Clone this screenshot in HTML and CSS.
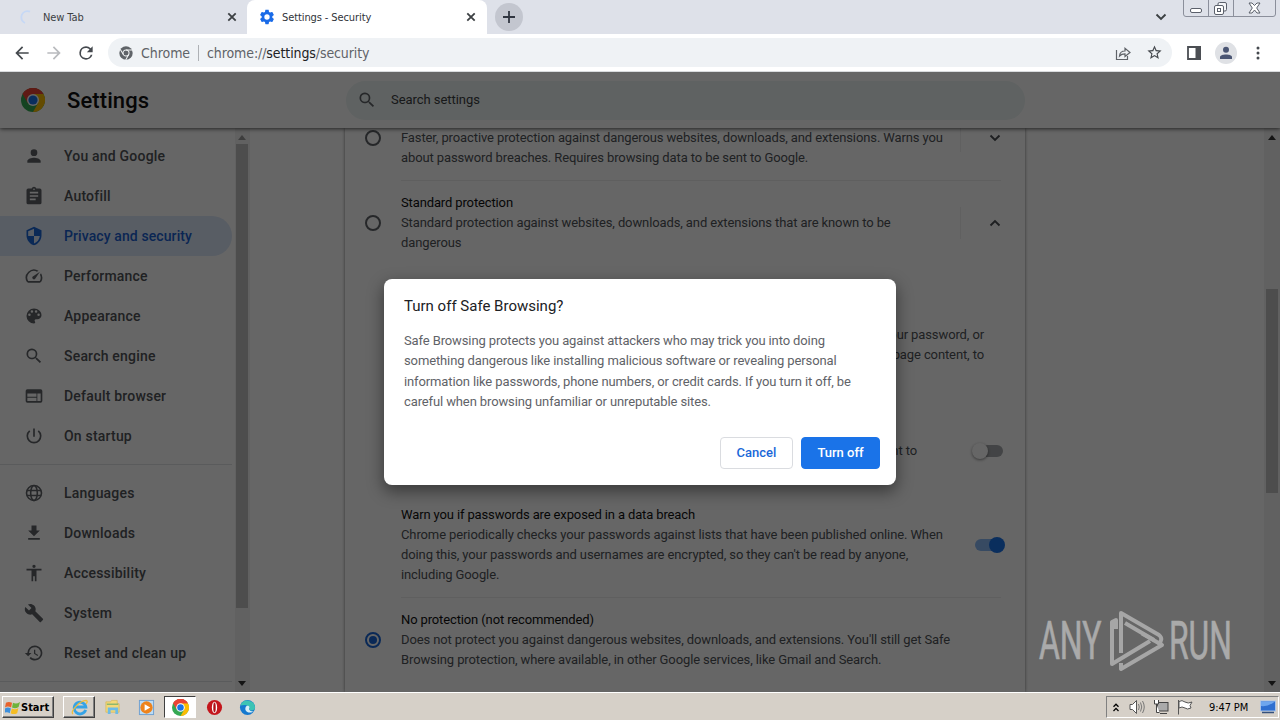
FILE: index.html
```html
<!DOCTYPE html>
<html lang="en">
<head>
<meta charset="utf-8">
<title>Settings - Security</title>
<link rel="stylesheet" href="styles.css">
</head>
<body>
<svg width="0" height="0" class="defs">
  <symbol id="chrome" viewBox="0 0 24 24">
    <circle cx="12" cy="12" r="12" fill="#34a853"/>
    <path d="M12 12 1.6 6A12 12 0 0 1 22.4 6Z" fill="#ea4335"/>
    <path d="M12 6H22.4A12 12 0 0 1 12 24L17.2 15Z" fill="#fbbc04"/>
    <path d="M1.6 6 6.8 15 12 12V6H22.4A12 12 0 0 0 1.6 6Z" fill="#ea4335"/>
    <circle cx="12" cy="12" r="6" fill="#fff"/>
    <circle cx="12" cy="12" r="4.6" fill="#1a73e8"/>
  </symbol>
</svg>

<header class="tabs">
  <div class="tab">
    <svg class="fav" viewBox="0 0 16 16"><path d="M11 2.6A6 6 0 1 0 6 14" fill="none" stroke="#c6d8f5" stroke-width="1.8"/></svg>
    <span>New Tab</span>
    <svg class="x" viewBox="0 0 10 10"><path d="M1.3 1.3l7.4 7.4M8.7 1.3L1.3 8.7"/></svg>
  </div>
  <div class="tab active">
    <svg class="fav" viewBox="0 0 24 24"><path fill="#1a6be8" d="M22 14.6l-2-1.6v-2l2-1.6c.3-.2.3-.5.2-.8l-2.200-4c-.1-.2-.4-.3-.7-.2l-2.600 1-1.700-1-.4-2.700c0-.3-.3-.5-.6-.5H10c-.3 0-.5.2-.6.5L9 4.400l-1.700 1-2.600-1c-.3-.1-.6 0-.7.2l-2.200 4c-.1.3-.1.600.2.800L4 11v2l-2 1.600c-.3.2-.3.500-.2.800l2.200 4c.1.2.4.3.7.2l2.600-1 1.700 1 .4 2.700c.1.3.3.5.6.5h4c.3 0 .6-.2.600-.5l.4-2.700 1.700-1 2.600 1c.3.1.6 0 .7-.2l2.200-4c.1-.3.1-.6-.2-.8zM12 16a4 4 0 1 1 0-8 4 4 0 0 1 0 8z"/></svg>
    <span>Settings - Security</span>
    <svg class="x" viewBox="0 0 10 10"><path d="M1.300 1.300l7.400 7.400M8.700 1.300L1.300 8.700"/></svg>
  </div>
  <div class="plus"><svg viewBox="0 0 14 14"><path d="M7 1v12M1 7h12" stroke="#303540" stroke-width="1.800"/></svg></div>
  <svg class="tabmenu" viewBox="0 0 12 8"><path d="M1.500 1.500 6 6l4.500-4.500" fill="none" stroke="#3c4043" stroke-width="1.900"/></svg>
  <svg class="winbtns" viewBox="0 0 93 17" fill="none" stroke="#8b8f9b">
    <path d="M.5 0V14Q.5 16.500 3 16.500H90Q92.500 16.500 92.500 14V0M25.500 0V16M50.500 0V16"/>
    <rect x="7.500" y="8.500" width="11" height="4" rx="1.500" fill="#fff" stroke="#5b606b"/>
    <g stroke="#5b606b"><rect x="35" y="2.500" width="8.500" height="8.500" rx="1.500" fill="#f3f4f7"/><rect x="31.500" y="5.500" width="9" height="9" rx="1.500" fill="#fff"/><rect x="34.500" y="8.500" width="3" height="3"/></g>
    <path d="M66 3h3l2.500 2.500L74 3h3l-3.300 5L77 13h-3l-2.500-3-2.500 3h-3l3.300-5z" fill="#fff" stroke="#5b606b"/>
  </svg>
</header>

<nav class="toolbar">
  <svg class="nav" viewBox="0 0 24 24"><path fill="#45494e" d="M20 11H7.830l5.590-5.590L12 4l-8 8 8 8 1.410-1.410L7.830 13H20z"/></svg>
  <svg class="nav" viewBox="0 0 24 24"><path fill="#b9bbbe" d="M12 4l-1.410 1.410L16.170 11H4v2h12.170l-5.580 5.590L12 20l8-8z"/></svg>
  <svg class="nav" viewBox="0 0 24 24"><path fill="#45494e" d="M17.650 6.350A7.950 7.950 0 0 0 12 4a8 8 0 1 0 7.730 10h-2.080A6 6 0 1 1 12 6c1.660 0 3.140.69 4.220 1.780L13 11h7V4z"/></svg>
  <div class="omni">
    <svg class="site" viewBox="0 0 24 24"><circle cx="12" cy="12" r="11.500" fill="#5f6368"/><g stroke="#f1f3f4" stroke-width="1.800" fill="none"><circle cx="12" cy="12" r="5.200"/><path d="M12 6.800H23M7.500 14.600 2 5.500M16.500 14.600 11.500 24"/></g></svg>
    <span class="chip">Chrome</span><i class="bar"></i>
    <span class="url">chrome://<b>settings</b>/security</span>
    <svg class="share" viewBox="0 0 16 16"><path d="M1.500 5V14.500H12.500V11M4.500 11C4.800 7.500 7 6 10 6V3.200L15 7.500 10 11.500V8.800C7.500 8.800 5.800 9.500 4.500 11Z" fill="none" stroke="#5f6368" stroke-width="1.200"/></svg>
    <svg class="star" viewBox="0 0 24 24"><path fill="#45494e" d="M22 9.240l-7.190-.62L12 2 9.190 8.630 2 9.240l5.460 4.730L5.820 21 12 17.270 18.180 21l-1.630-7.030zM12 15.400l-3.760 2.270 1-4.280-3.320-2.880 4.380-.38L12 6.100l1.710 4.040 4.380.38-3.320 2.880 1 4.280z"/></svg>
  </div>
  <svg class="side" viewBox="0 0 14 14"><path d="M1 1H13V13H1Z" fill="none" stroke="#4b4e53" stroke-width="1.800"/><path d="M8.500 0H14V14H8.500Z" fill="#4b4e53"/></svg>
  <div class="avatar"><svg viewBox="0 0 14 14"><circle cx="7" cy="3.800" r="3" fill="#4a5573"/><path d="M1 13V11C1 7.500 13 7.500 13 11V13Z" fill="#4a5573"/></svg></div>
  <svg class="dots" viewBox="0 0 4 14" fill="#45494e"><circle cx="2" cy="2" r="1.500"/><circle cx="2" cy="7" r="1.500"/><circle cx="2" cy="12" r="1.500"/></svg>
</nav>

<div class="page">
  <div class="head">
    <svg class="logo"><use href="#chrome"/></svg>
    <h1>Settings</h1>
    <div class="search"><svg viewBox="0 0 24 24"><path fill="#5f6368" d="M15.500 14h-.79l-.28-.27A6.500 6.500 0 1 0 13.730 14.430l.27.280v.79l5 4.990L20.490 19zm-6 0a4.500 4.500 0 1 1 0-9 4.500 4.500 0 0 1 0 9z"/></svg><span>Search settings</span></div>
  </div>
  <div class="cols">
    <aside class="menu">
      <a><svg viewBox="0 0 24 24"><path d="M12 12a4 4 0 1 0 0-8 4 4 0 0 0 0 8zm0 2c-2.670 0-8 1.340-8 4v2h16v-2c0-2.660-5.330-4-8-4z"/></svg>You and Google</a>
      <a><svg viewBox="0 0 24 24"><path d="M19 3h-4.180a3 3 0 0 0-5.640 0H5a2 2 0 0 0-2 2v15a2 2 0 0 0 2 2h14a2 2 0 0 0 2-2V5a2 2 0 0 0-2-2zm-7 0a1 1 0 1 1 0 2 1 1 0 0 1 0-2zm2 14H7v-2h7zm3-4H7v-2h10zm0-4H7V7h10z"/></svg>Autofill</a>
      <a class="on"><svg viewBox="0 0 24 24"><path d="M12 1 3 5v6c0 5.550 3.840 10.740 9 12 5.160-1.260 9-6.450 9-12V5zm0 10.990h7c-.53 4.120-3.280 7.790-7 8.940V12H5V6.300l7-3.110z"/></svg>Privacy and security</a>
      <a><svg viewBox="0 0 24 24"><path d="M20.380 8.570l-1.230 1.850a8 8 0 0 1-.22 7.580H5.070A8 8 0 0 1 15.580 6.850l1.850-1.230A10 10 0 0 0 3.350 19a2 2 0 0 0 1.720 1h13.850a2 2 0 0 0 1.740-1 10 10 0 0 0-.27-10.440zM10.590 15.410a2 2 0 0 0 2.830 0l5.660-8.490-8.490 5.660a2 2 0 0 0 0 2.830z"/></svg>Performance</a>
      <a><svg viewBox="0 0 24 24"><path d="M12 3a9 9 0 0 0 0 18 1.500 1.500 0 0 0 1.110-2.500 1.500 1.500 0 0 1 1.120-2.500H16a5 5 0 0 0 5-5c0-4.420-4.030-8-9-8zm-5.500 9a1.500 1.500 0 1 1 0-3 1.500 1.500 0 0 1 0 3zm3-4a1.500 1.500 0 1 1 0-3 1.500 1.500 0 0 1 0 3zm5 0a1.500 1.500 0 1 1 0-3 1.500 1.500 0 0 1 0 3zm3 4a1.500 1.500 0 1 1 0-3 1.500 1.500 0 0 1 0 3z"/></svg>Appearance</a>
      <a><svg viewBox="0 0 24 24"><path d="M15.500 14h-.79l-.28-.27A6.500 6.500 0 1 0 13.730 14.430l.27.280v.79l5 4.990L20.490 19zm-6 0a4.500 4.500 0 1 1 0-9 4.500 4.500 0 0 1 0 9z"/></svg>Search engine</a>
      <a><svg viewBox="0 0 24 24"><path d="M20 4H4a2 2 0 0 0-2 2v12a2 2 0 0 0 2 2h16a2 2 0 0 0 2-2V6a2 2 0 0 0-2-2zm-5 14H4v-4h11zm0-5H4V9h11zm5 5h-4V9h4z"/></svg>Default browser</a>
      <a><svg viewBox="0 0 24 24"><path d="M13 3h-2v10h2zm4.830 2.170-1.420 1.420A7 7 0 1 1 7.580 6.580L6.170 5.170a9 9 0 1 0 11.660 0z"/></svg>On startup</a>
      <hr>
      <a><svg viewBox="0 0 24 24" ><g fill="none" stroke="#5f6368" stroke-width="1.900"><circle cx="12" cy="12" r="9"/><ellipse cx="12" cy="12" rx="4" ry="9"/><path d="M3.500 9H20.500M3.500 15H20.500"/></g></svg>Languages</a>
      <a><svg viewBox="0 0 24 24"><path d="M19 9h-4V3H9v6H5l7 7zM5 18v2h14v-2z"/></svg>Downloads</a>
      <a><svg viewBox="0 0 24 24"><path d="M12 2a2 2 0 1 1 0 4 2 2 0 0 1 0-4zm9 7h-6v13h-2v-6h-2v6H9V9H3V7h18z"/></svg>Accessibility</a>
      <a><svg viewBox="0 0 24 24"><path d="M22.700 19l-9.100-9.100c.9-2.300.4-5-1.500-6.900-2-2-5-2.400-7.400-1.300L9 6 6 9 1.600 4.700C.4 7.100.9 10.100 2.900 12.100c1.900 1.900 4.600 2.400 6.900 1.500l9.100 9.100c.4.4 1 .4 1.400 0l2.300-2.300c.5-.4.5-1.100.1-1.400z"/></svg>System</a>
      <a><svg viewBox="0 0 24 24"><path d="M13 3a9 9 0 0 0-9 9H1l3.890 3.890.07.140L9 12H6a7 7 0 1 1 2.060 4.940l-1.420 1.420A9 9 0 1 0 13 3zm-1 5v5l4.280 2.540.72-1.210-3.500-2.080V8z"/></svg>Reset and clean up</a>
      <hr>
    </aside>
    <div class="scroll sb-menu"><i class="up"></i><b></b><i class="down"></i></div>
    <main class="card">
      <section class="opt a">
        <i class="radio"></i>
        <div class="txt"><p>Faster, proactive protection against dangerous websites, downloads, and extensions. Warns you</p><p>about password breaches. Requires browsing data to be sent to Google.</p></div>
        <div class="exp"><svg viewBox="0 0 12 8"><path d="M1.500 1.500 6 6l4.500-4.500"/></svg></div>
      </section>
      <section class="opt b">
        <i class="radio"></i>
        <div class="txt"><h2>Standard protection</h2><p>Standard protection against websites, downloads, and extensions that are known to be</p><p>dangerous</p></div>
        <div class="exp"><svg viewBox="0 0 12 8"><path d="M1.500 6.500 6 2l4.500 4.500"/></svg></div>
      </section>
      <section class="detail"><p>your password, or</p><p>page content, to</p></section>
      <section class="sub s1"><p class="tail">sent to</p><div class="toggle off"><i></i></div></section>
      <section class="sub s2"><div class="txt"><h2>Warn you if passwords are exposed in a data breach</h2><p>Chrome periodically checks your passwords against lists that have been published online. When</p><p>doing this, your passwords and usernames are encrypted, so they can't be read by anyone,</p><p>including Google.</p></div><div class="toggle"><i></i></div></section>
      <section class="opt c">
        <i class="radio sel"></i>
        <div class="txt"><h2>No protection (not recommended)</h2><p>Does not protect you against dangerous websites, downloads, and extensions. You'll still get Safe</p><p>Browsing protection, where available, in other Google services, like Gmail and Search.</p></div>
      </section>
    </main>
    <div class="scroll sb-page"><i class="up"></i><b></b><i class="down"></i></div>
  </div>
  <div class="scrim">
    <div class="dialog">
      <h3>Turn off Safe Browsing?</h3>
      <p>Safe Browsing protects you against attackers who may trick you into doing<br>something dangerous like installing malicious software or revealing personal<br>information like passwords, phone numbers, or credit cards. If you turn it off, be<br>careful when browsing unfamiliar or unreputable sites.</p>
      <div class="btns"><button>Cancel</button><button class="primary">Turn off</button></div>
    </div>
  </div>
  <svg class="mark" viewBox="0 0 194 64">
    <g fill="#aaa" stroke="#aaa" stroke-width=".7"><text transform="translate(1 50) scale(.6 1)" textLength="104" lengthAdjust="spacingAndGlyphs">ANY</text><text transform="translate(131 50) scale(.6 1)" textLength="105" lengthAdjust="spacingAndGlyphs">RUN</text></g>
    <g fill="none" stroke="#a6a6a6" stroke-width="4" stroke-linejoin="round"><path d="M104 0" /><path d="M104.500 0"/><path d="M83 44V4L121 26Q126 30 120 36M87 14 104 24 116 31"/><path d="M78 20V11L74 13V55L112 32"/><path d="M104 24.500 124 36 83 60V54"/></g>
  </svg>
</div>

<footer class="taskbar">
  <div class="start"><svg viewBox="0 0 16 16"><path d="M1 3Q4 1 7.500 3L6.500 8Q3 6 0 8Z" fill="#e8632c"/><path d="M8.500 3Q12 5 16 2L14.500 7.500Q11 10 7.500 8Z" fill="#6db33b"/><path d="M0 9Q3 7 6.300 9L5 14Q2 12-1 14Z" fill="#3d8fdc"/><path d="M7.300 9Q11 11 14.300 8.500L13 14Q9 16 6 14Z" fill="#f5bd24"/></svg>Start</div>
  <div class="task raised"><svg viewBox="0 0 18 18"><path d="M15.500 11.500A6.200 6.200 0 1 1 15.700 8.500H5" fill="none" stroke="#35a3e6" stroke-width="3"/><path d="M2 16C-1 13 9 2 16 1.500 18 2 17 4 16 5" fill="none" stroke="#efbd3a" stroke-width="1.400"/></svg></div>
  <div class="task"><svg viewBox="0 0 18 18"><path d="M2 3H7L8 1.500H14V5H16V14H2Z" fill="#f3d877" stroke="#d5b555" stroke-width=".7"/><path d="M4 16V9H15V16H12V12H7V16Z" fill="#6dbbe6"/><path d="M3 5.500H15" stroke="#6fae6a" stroke-width="1.200"/></svg></div>
  <div class="task"><svg viewBox="0 0 18 18"><rect x="1.500" y="1.500" width="15" height="15" fill="#bcdcf5" stroke="#6d9fd0"/><circle cx="9" cy="9" r="6.500" fill="#ee831c"/><path d="M7 5.500 13 9l-6 3.500z" fill="#fff"/></svg></div>
  <div class="task pressed"><svg><use href="#chrome"/></svg></div>
  <div class="task"><svg viewBox="0 0 18 18"><circle cx="9" cy="9" r="8" fill="#c4161c"/><ellipse cx="9" cy="9" rx="2.800" ry="6" fill="#fff"/><ellipse cx="9" cy="9" rx="1.300" ry="5.200" fill="#b01016"/></svg></div>
  <div class="task"><svg viewBox="0 0 18 18"><circle cx="9" cy="9" r="8" fill="#1679cf"/><path d="M1.500 7A8 8 0 0 1 17 9C17 12 13 13 11 11.500 12 8 8 5 1.500 7Z" fill="#3cc3b4"/><path d="M11 11.500C10 10.500 12 9.500 10.500 7.800 8 6 6 9 7 12 8.500 15 13 15 16 13 14 13.500 12 13 11 11.500Z" fill="#d9eef7"/></svg></div>
  <div class="tray">
    <svg class="chev" viewBox="0 0 6 9"><path d="M.5 3.800 3 1.200 5.500 3.800M.5 8 3 5.400 5.500 8" fill="none" stroke="#000" stroke-width="1.300"/></svg>
    <svg class="ti" viewBox="0 0 16 16" fill="#fff" stroke="#555"><path d="M1 5.500H3.500L7.500 1.500V14.500L3.500 10.500H1Z"/><path d="M9.500 5Q11 8 9.500 11M11.500 3.500Q14 8 11.500 12.500M13.500 2Q17 8 13.500 14" fill="none" stroke="#777"/></svg>
    <svg class="ti" viewBox="0 0 16 16" stroke="#444"><rect x="4.500" y="3.500" width="10.500" height="8.500" fill="#aaa"/><path d="M7 14.500H14" /><path d="M1.500 1V5H5.500V1M3.500 5V13.500H6.500" fill="#fff"/></svg>
    <svg class="ti" viewBox="0 0 16 16" stroke="#555"><path d="M1.500 1V15.500M2 2.500Q5 .5 8 3 11 5 15 3L13 6.500 14 9Q10 11 8 9 5 7 2 9Z" fill="#fff"/></svg>
    <span>9:47 PM</span>
    <svg class="desk" viewBox="0 0 16 14"><rect x=".5" y="1" width="15" height="10" fill="#2f6fd0" stroke="#a9c3e8"/><path d="M1 6Q8 7 15 1.500H1Z" fill="#6ea6ee"/><path d="M2 12.500H14" stroke="#34507c" stroke-width="1.500"/></svg>
  </div>
</footer>
</body>
</html>
```
FILE: styles.css
```css
* { box-sizing: border-box; }
body { margin: 0; width: 1280px; height: 720px; overflow: hidden; display: flex; flex-direction: column; font-family: Roboto, "Liberation Sans", sans-serif; background: #fff; }
svg { display: block; flex: none; }
.defs { position: absolute; }
h1, h2, h3, p { margin: 0; font-weight: 400; white-space: nowrap; }

.tabs { height: 34px; background: #dee1e9; display: flex; align-items: center; font: 11px "DejaVu Sans Condensed", "DejaVu Sans", sans-serif; font-stretch: condensed; color: #3c4043; flex: none; }
.tab { width: 247px; height: 34px; display: flex; align-items: center; padding: 0 10px 0 19px; }
.tab span { flex: 1; margin-left: 8px; letter-spacing: -.1px; }
.tab.active { width: 240px; background: #fff; border-radius: 8px 8px 0 0; padding: 0 11px 0 12px; color: #303338; }
.tab.active span { margin-left: 7px; }
.fav { width: 16px; height: 16px; }
.x { width: 10px; height: 10px; stroke: #3c4043; stroke-width: 1.8; }
.plus { width: 28px; height: 28px; border-radius: 50%; background: #c3c6cf; margin-left: 8px; display: grid; place-items: center; }
.plus svg { width: 14px; height: 14px; }
.tabmenu { width: 12px; height: 8px; margin-left: auto; }
.winbtns { width: 93px; height: 17px; margin: 0 4px 0 16px; align-self: flex-start; }

.toolbar { height: 38px; flex: none; display: flex; align-items: center; padding: 0 20px 0 12px; border-bottom: 1px solid #d9dbde; }
.nav { width: 20px; height: 20px; margin-right: 12px; }
.omni { width: 1064px; height: 29px; border-radius: 15px; background: #eff2f5; display: flex; align-items: center; padding: 0 9px 0 11px; font: 14px "DejaVu Sans Condensed", "DejaVu Sans", sans-serif; font-stretch: condensed; color: #5f6368; }
.site { width: 14px; height: 14px; margin-right: 8px; }
.chip { width: 49px; letter-spacing: -.05px; white-space: nowrap; }
.bar { width: 1px; height: 16px; background: #aeb1b5; margin: 0 8px; }
.url { letter-spacing: -.1px; }
.url b { font-weight: 400; color: #202124; }
.share { width: 16px; height: 16px; margin-left: auto; margin-right: 15px; }
.star { width: 17px; height: 17px; }
.side { width: 14px; height: 14px; margin-left: 15px; }
.avatar { width: 22px; height: 22px; border-radius: 50%; background: #dfe1e5; margin-left: 14px; display: grid; place-items: center; }
.avatar svg { width: 14px; height: 14px; }
.dots { width: 4px; height: 14px; margin-left: auto; }

.page { position: relative; height: 620px; flex: none; overflow: hidden; display: flex; flex-direction: column; }
.head { height: 56px; flex: none; display: flex; align-items: center; padding-left: 21px; background: #fff; box-shadow: 0 1px 4px rgba(0,0,0,.65); z-index: 1; }
.logo { width: 24px; height: 24px; }
h1 { font-size: 22px; font-weight: 500; color: #111; margin-left: 22px; width: 279px; letter-spacing: .1px; }
.search { width: 679px; height: 39px; border-radius: 20px; background: #edf5f4; display: flex; align-items: center; padding-left: 11px; font-size: 13px; letter-spacing: -.05px; color: #3c4043; }
.search svg { width: 20px; height: 20px; margin-right: 14px; }
.search span { padding-bottom: 2px; }
.cols { height: 564px; display: flex; }
.menu { width: 235px; padding-top: 8px; overflow: hidden; }
.menu a { display: flex; align-items: center; width: 232px; height: 40px; padding-left: 24px; font-size: 14px; font-weight: 500; letter-spacing: .2px; color: #505357; white-space: nowrap; }
.menu svg { width: 20px; height: 20px; margin-right: 20px; fill: #5f6368; }
.menu .on { background: #dce8fb; border-radius: 0 20px 20px 0; color: #1a5fd0; letter-spacing: .1px; }
.menu .on svg { fill: #1a67d8; }
.menu hr { margin: 8px 0; width: 232px; height: 1px; border: 0; background: #e2e3e5; }
.scroll { width: 15px; background: #f3f3f3; display: flex; flex-direction: column; align-items: center; flex: none; }
.scroll i { border: 4px solid transparent; height: 0; flex: none; }
.scroll .up { border-bottom-color: #333; border-top: 0; border-bottom-width: 5px; margin: 7px 0 4px; }
.scroll .down { border-top-color: #333; border-bottom: 0; border-top-width: 5px; margin: auto 0 6px; }
.scroll b { width: 12px; background: #c1c1c1; height: 464px; }
.sb-menu { padding-right: 1px; }
.sb-menu .up { border-bottom-color: #999; }
.sb-page { width: 16px; margin-left: auto; }
.sb-page b { height: 204px; margin-top: 145px; }

.card { width: 680px; margin-left: 95px; padding: 0 24px 0 56px; box-shadow: 0 0 3px rgba(0,0,0,.5); font-size: 13px; line-height: 20px; color: #4f5358; letter-spacing: -.11px; flex: none; }
.card h2 { font-size: 13px; line-height: 20px; color: #111; letter-spacing: -.13px; }
.opt { display: flex; border-bottom: 1px solid #ededee; }
.opt .txt { width: 559px; flex: none; }
.a { height: 53px; }
.b { height: 85px; padding-top: 12px; border: 0; }
.c { border: 0; padding-top: 12px; border-top: 1px solid #ededee; }
.radio { width: 16px; height: 16px; border: 2px solid #5f6368; border-radius: 50%; margin: 2px 20px 0 -36px; flex: none; display: grid; place-items: center; }
.b .radio, .c .radio { margin-top: 22px; }
.radio.sel { border-color: #1a67d8; }
.sel::after { content: ""; width: 8px; height: 8px; border-radius: 50%; background: #1a67d8; }
.exp { width: 41px; border-left: 1px solid #efeff0; height: 24px; display: flex; justify-content: flex-end; align-items: flex-start; padding-top: 6px; }
.b .exp { height: 32px; margin-top: 14px; padding-top: 12px; }
.exp svg { width: 12px; height: 8px; fill: none; stroke: #4c4f54; stroke-width: 1.9; }
.detail { height: 174px; padding: 59px 17px 0 0; text-align: right; }
.sub { display: flex; justify-content: space-between; }
.s1 { height: 64px; padding-top: 1px; }
.s1 .tail { width: 516px; text-align: right; }
.s2 { height: 93px; padding-top: 1px; }
.toggle { width: 28px; height: 12px; border-radius: 6px; background: #8ab8f5; position: relative; margin: 34px -2px 0 0; }
.toggle i { position: absolute; right: -2px; top: -2px; width: 16px; height: 16px; border-radius: 50%; background: #1a73e8; }
.toggle.off { background: #a8abae; margin-top: 4px; }
.toggle.off i { background: #fff; left: -3px; box-shadow: 0 1px 3px rgba(0,0,0,.45); }

.scrim { position: absolute; inset: 0; background: rgba(0,0,0,.6); display: grid; place-items: center; z-index: 2; }
.dialog { width: 512px; height: 206px; background: #fff; border-radius: 8px; padding: 16px 16px 16px 20px; box-shadow: 0 6px 16px 1px rgba(0,0,0,.42); display: flex; flex-direction: column; }
.dialog h3 { font-size: 15px; line-height: 22px; color: #202124; letter-spacing: 0; }
.dialog p { font-size: 13px; line-height: 20.3px; color: #5f6368; margin-top: 14px; letter-spacing: -.12px; }
.btns { display: flex; justify-content: flex-end; gap: 8px; margin-top: auto; }
button { height: 32px; width: 73px; border: 1px solid #dadce0; border-radius: 4px; background: #fff; color: #1a67d8; font: 500 13px Roboto, sans-serif; letter-spacing: 0; padding: 0 0 2px; }
.primary { width: 79px; background: #1a73e8; border-color: #1a73e8; color: #fff; }
.mark { position: absolute; left: 1038px; top: 537px; width: 194px; height: 64px; z-index: 3; font: 53px Roboto, sans-serif; }

.taskbar { height: 28px; background: #d6d0c8; border-top: 1px solid #fff; display: flex; align-items: center; flex: none; padding: 1px 1px 0 2px; }
.start { width: 52px; height: 22px; border: 1px solid; border-color: #fff #404040 #404040 #fff; box-shadow: inset -1px -1px #808080; display: flex; align-items: center; gap: 1px; font: bold 11px "DejaVu Sans Condensed", "DejaVu Sans", sans-serif; font-stretch: condensed; color: #000; padding-left: 2px; margin-right: 9px; }
.start svg { width: 15px; height: 15px; }
.task { width: 32px; height: 22px; display: grid; place-items: center; margin-right: 1.8px; }
.task svg { width: 17px; height: 17px; }
.raised { border: 1px solid; border-color: #fff #404040 #404040 #fff; box-shadow: inset -1px -1px #808080; }
.pressed { background: #fff; border: 1px solid; border-color: #404040 #fff #fff #404040; }
.tray { margin-left: auto; width: 173px; height: 22px; border: 1px solid; border-color: #808080 #fff #fff #808080; display: flex; align-items: center; padding-left: 6px; font: 11px "DejaVu Sans Condensed", "DejaVu Sans", sans-serif; font-stretch: condensed; color: #000; }
.chev { width: 6px; height: 9px; margin-right: 10px; }
.ti { width: 16px; height: 16px; margin-right: 8px; }
.tray span { margin-left: 8px; letter-spacing: -.1px; white-space: nowrap; width: 41px; }
.desk { width: 16px; height: 14px; margin-left: auto; margin-right: 2px; }
```
